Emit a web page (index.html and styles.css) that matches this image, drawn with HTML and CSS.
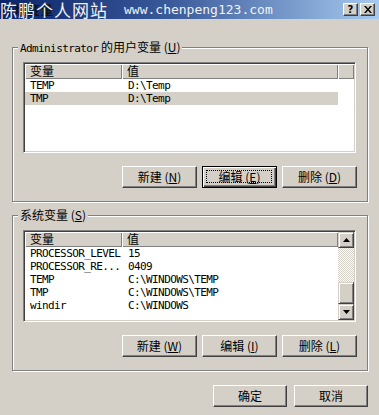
FILE: index.html
```html
<!DOCTYPE html>
<html>
<head>
<meta charset="utf-8">
<link rel="stylesheet" href="styles.css">
</head>
<body>
<div class="window">
  <div class="titlebar">
    <span class="title">环境变量</span>
    <span class="watermark"><span class="wm-cn">陈鹏个人网站</span><span class="wm-url">www.chenpeng123.com</span></span>
    <div class="tbtns">
      <span class="tbtn q">?</span>
      <span class="tbtn x"><svg width="8" height="7" viewBox="0 0 8 7"><path d="M0 0h2l2 2.5L6 0h2L5 3.5 8 7H6L4 4.5 2 7H0l3-3.5z" fill="#000"/></svg></span>
    </div>
  </div>
  <div class="content">
    <div class="group g1">
      <div class="glabel"><span class="mono">Administrator</span> 的用户变量 (<u>U</u>)</div>
      <div class="list l1">
        <div class="lhead">
          <div class="hc c1">变量</div>
          <div class="hc c2">值</div>
          <div class="hc c3"></div>
        </div>
        <div class="row"><div class="cell c1">TEMP</div><div class="cell c2">D:\Temp</div></div>
        <div class="row sel"><div class="cell c1">TMP</div><div class="cell c2">D:\Temp</div></div>
      </div>
      <div class="btnrow">
        <div class="btn">新建 (<u>N</u>)</div>
        <div class="btn default">编辑 (<u>E</u>)</div>
        <div class="btn">删除 (<u>D</u>)</div>
      </div>
    </div>
    <div class="group g2">
      <div class="glabel">系统变量 (<u>S</u>)</div>
      <div class="list l2">
        <div class="lmain">
          <div class="lhead">
            <div class="hc c1">变量</div>
            <div class="hc c2">值</div>
          </div>
          <div class="row"><div class="cell c1">PROCESSOR_LEVEL</div><div class="cell c2">15</div></div>
          <div class="row"><div class="cell c1">PROCESSOR_RE...</div><div class="cell c2">0409</div></div>
          <div class="row"><div class="cell c1">TEMP</div><div class="cell c2">C:\WINDOWS\TEMP</div></div>
          <div class="row"><div class="cell c1">TMP</div><div class="cell c2">C:\WINDOWS\TEMP</div></div>
          <div class="row"><div class="cell c1">windir</div><div class="cell c2">C:\WINDOWS</div></div>
        </div>
        <div class="vscroll">
          <div class="sbtn"><svg width="7" height="4" viewBox="0 0 7 4"><path d="M3.5 0L7 4H0z" fill="#000"/></svg></div>
          <div class="track"></div>
          <div class="thumb"></div>
          <div class="sbtn"><svg width="7" height="4" viewBox="0 0 7 4"><path d="M0 0h7L3.5 4z" fill="#000"/></svg></div>
        </div>
      </div>
      <div class="btnrow">
        <div class="btn">新建 (<u>W</u>)</div>
        <div class="btn">编辑 (<u>I</u>)</div>
        <div class="btn">删除 (<u>L</u>)</div>
      </div>
    </div>
    <div class="okrow">
      <div class="btn ok">确定</div>
      <div class="btn ok">取消</div>
    </div>
  </div>
</div>
</body>
</html>
```

FILE: styles.css
```css
html, body {
  margin: 0;
  padding: 0;
  background: #d4d0c8;
}
body {
  font-family: "Noto Sans CJK SC", sans-serif;
  font-size: 12px;
  color: #000;
}
.window {
  width: 379px;
  height: 415px;
  background: #d4d0c8;
  display: flex;
  flex-direction: column;
  overflow: hidden;
}
.titlebar {
  position: relative;
  height: 19px;
  flex: none;
  background: linear-gradient(to right, #0a246a 0%, #3a5a9a 45%, #a6caf0 100%);
  display: flex;
  align-items: center;
  padding-left: 2px;
}
.title {
  font-weight: bold;
  color: #111;
  font-size: 12px;
  line-height: 19px;
  letter-spacing: 1px;
}
.watermark {
  position: absolute;
  left: 0;
  top: 0;
  height: 19px;
  display: flex;
  align-items: center;
  color: #f2f2f2;
  white-space: nowrap;
}
.wm-cn {
  font-size: 17px;
  line-height: 19px;
  letter-spacing: 1px;
}
.wm-url {
  font-family: "DejaVu Sans Mono", monospace;
  font-size: 13px;
  margin-left: 16px;
  line-height: 19px;
}
.tbtns {
  margin-left: auto;
  display: flex;
  gap: 2px;
  padding-right: 4px;
}
.tbtn {
  box-sizing: border-box;
  width: 15px;
  height: 13px;
  background: #d4d0c8;
  border: 1px solid;
  border-color: #fff #404040 #404040 #fff;
  box-shadow: inset -1px -1px #808080;
  display: flex;
  align-items: center;
  justify-content: center;
  font-family: "DejaVu Sans", sans-serif;
  font-weight: bold;
  font-size: 10px;
  line-height: 1;
}
.content {
  padding: 28px 11px 0 12px;
  display: flex;
  flex-direction: column;
}
.group {
  box-sizing: border-box;
  border: 1px solid #808080;
  box-shadow: inset 1px 1px #fff, 1px 1px #fff;
  display: flex;
  flex-direction: column;
}
.g1 { height: 155px; }
.g2 { height: 156px; margin-top: 13px; }
.glabel {
  align-self: flex-start;
  margin: -8px 0 0 5px;
  padding: 0 2px;
  background: #d4d0c8;
  line-height: 14px;
  height: 14px;
  white-space: nowrap;
}
.mono {
  font-family: "DejaVu Sans Mono", monospace;
  font-size: 11px;
  letter-spacing: -0.6px;
}
.list {
  box-sizing: border-box;
  margin: 8px 0 0 10px;
  width: 333px;
  background: #fff;
  border: 1px solid;
  border-color: #808080 #fff #fff #808080;
  box-shadow: inset 1px 1px #404040, inset -1px -1px #d4d0c8;
  padding: 1px;
  overflow: hidden;
}
.l1 { height: 91px; }
.l2 { height: 92px; display: flex; }
.lmain { flex: 1; min-width: 0; }
.lhead {
  display: flex;
  height: 15px;
}
.hc {
  box-sizing: border-box;
  height: 15px;
  background: #d4d0c8;
  box-shadow: inset 1px 1px #fff, inset -1px -1px #808080;
  line-height: 14px;
  padding-left: 5px;
  white-space: nowrap;
}
.c1 { width: 97px; }
.c2 { width: 216px; }
.c3 { flex: 1; }
.l2 .c2 { flex: 1; }
.row {
  display: flex;
  height: 13px;
  font-family: "DejaVu Sans Mono", monospace;
  font-size: 11px;
  letter-spacing: -0.6px;
  line-height: 13px;
}
.row.sel .cell { background: #d4d0c8; }
.cell {
  box-sizing: border-box;
  padding-left: 5px;
  white-space: nowrap;
  overflow: hidden;
}
.cell.c2 { padding-left: 6px; }
.vscroll {
  width: 16px;
  flex: none;
  display: flex;
  flex-direction: column;
}
.sbtn {
  box-sizing: border-box;
  height: 16px;
  background: #d4d0c8;
  border: 1px solid;
  border-color: #d4d0c8 #404040 #404040 #d4d0c8;
  box-shadow: inset 1px 1px #fff, inset -1px -1px #808080;
  display: flex;
  align-items: center;
  justify-content: center;
}
.track {
  flex: 1;
  background: repeating-conic-gradient(#fff 0 25%, #d4d0c8 0 50%) 0 0 / 2px 2px;
}
.thumb {
  box-sizing: border-box;
  height: 22px;
  background: #d4d0c8;
  border: 1px solid;
  border-color: #d4d0c8 #404040 #404040 #d4d0c8;
  box-shadow: inset 1px 1px #fff, inset -1px -1px #808080;
}
.btnrow {
  display: flex;
  justify-content: flex-end;
  gap: 5px;
  margin: 13px 10px 0 0;
}
.btn {
  position: relative;
  box-sizing: border-box;
  width: 75px;
  height: 22px;
  background: #d4d0c8;
  border: 1px solid;
  border-color: #fff #404040 #404040 #fff;
  box-shadow: inset -1px -1px #808080;
  display: flex;
  align-items: center;
  justify-content: center;
  line-height: 1;
  white-space: nowrap;
}
.btn.default {
  border-color: #000;
  box-shadow: inset 1px 1px #fff, inset -1px -1px #404040, inset -2px -2px #808080;
}
.btn.default::after {
  content: "";
  position: absolute;
  left: 3px;
  right: 4px;
  top: 3px;
  bottom: 4px;
  border: 1px dotted #000;
}
.okrow {
  display: flex;
  justify-content: flex-end;
  gap: 7px;
  margin-top: 14px;
}
.btn.ok { width: 74px; }
```
